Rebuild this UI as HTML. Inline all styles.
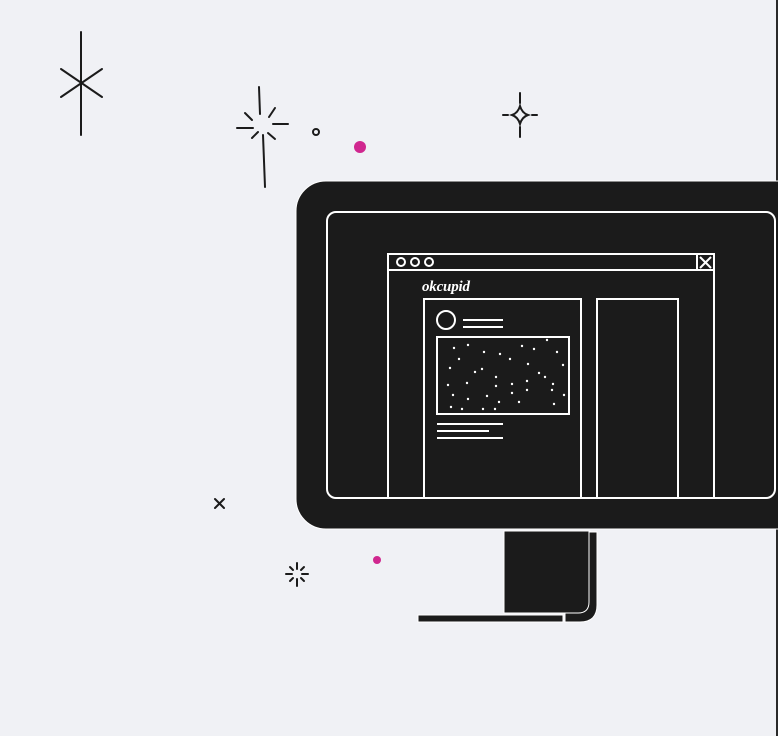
<!DOCTYPE html>
<html><head><style>
html,body{margin:0;padding:0;background:#f0f1f5;}
svg{display:block}
</style></head><body>
<svg width="778" height="736" viewBox="0 0 778 736" xmlns="http://www.w3.org/2000/svg">
<rect width="778" height="736" fill="#f0f1f5"/>
<rect x="776" y="0" width="2" height="736" fill="#2a2a2a"/>
<g stroke="#1b1b1b" stroke-width="2" stroke-linecap="round" fill="none">
<line x1="81" y1="32" x2="81" y2="135"/>
<line x1="61" y1="69" x2="102" y2="97"/>
<line x1="61" y1="97" x2="102" y2="69"/>
<line x1="259" y1="87" x2="260" y2="114"/>
<line x1="263" y1="135" x2="265" y2="187"/>
<line x1="237" y1="128" x2="253" y2="128"/>
<line x1="273" y1="124" x2="288" y2="124"/>
<line x1="245" y1="113" x2="252" y2="120"/>
<line x1="275" y1="108" x2="269" y2="117"/>
<line x1="252" y1="138" x2="258" y2="132"/>
<line x1="268" y1="133" x2="275" y2="139"/>
<circle cx="316" cy="132" r="3"/>
<line x1="520" y1="93" x2="520" y2="103"/>
<line x1="520" y1="127" x2="520" y2="137"/>
<line x1="503" y1="115" x2="508" y2="115"/>
<line x1="532" y1="115" x2="537" y2="115"/>
<path d="M520 106 Q522 113 528 115 Q522 117 520 124 Q518 117 512 115 Q518 113 520 106Z"/>
<line x1="215" y1="499" x2="224" y2="508"/>
<line x1="224" y1="499" x2="215" y2="508"/>
<line x1="297" y1="563" x2="297" y2="569"/>
<line x1="297" y1="579" x2="297" y2="586"/>
<line x1="286" y1="574" x2="292" y2="574"/>
<line x1="302" y1="574" x2="308" y2="574"/>
<line x1="290" y1="567" x2="293" y2="570"/>
<line x1="304" y1="567" x2="301" y2="570"/>
<line x1="290" y1="581" x2="293" y2="578"/>
<line x1="304" y1="581" x2="301" y2="578"/>
</g>
<circle cx="360" cy="147" r="6" fill="#d0278f"/>
<circle cx="377" cy="560" r="4" fill="#d0278f"/>
<rect x="504" y="531" width="86" height="82" fill="#1b1b1b" stroke="#fff" stroke-width="1"/>
<path d="M589 532 V602 Q589 613 578 613 H565 V622 H580 Q597 622 597 605 V532 Z" fill="#1b1b1b" stroke="#fff" stroke-width="1"/>
<rect x="418" y="615" width="145" height="7" fill="#1b1b1b" stroke="#fff" stroke-width="1"/>
<rect x="296" y="181" width="520" height="348" rx="30" fill="#1b1b1b" stroke="#fff" stroke-width="1"/>
<g stroke="#fff" stroke-width="2" fill="none">
<path d="M388 498 V254 H714 V498"/>
<line x1="388" y1="270" x2="714" y2="270"/>
<line x1="697" y1="254" x2="697" y2="270"/>
<line x1="700" y1="257" x2="711" y2="268"/>
<line x1="711" y1="257" x2="700" y2="268"/>
<circle cx="401" cy="262" r="4"/>
<circle cx="415" cy="262" r="4"/>
<circle cx="429" cy="262" r="4"/>
<path d="M424 498 V299 H581 V498"/>
<path d="M597 498 V299 H678 V498"/>
<circle cx="446" cy="320" r="9"/>
<line x1="463" y1="320" x2="503" y2="320"/>
<line x1="463" y1="327" x2="503" y2="327"/>
<rect x="437" y="337" width="132" height="77"/>
<line x1="437" y1="424" x2="503" y2="424"/>
<line x1="437" y1="431" x2="489" y2="431"/>
<line x1="437" y1="438" x2="503" y2="438"/>
</g>
<rect x="327" y="212" width="448" height="286" rx="9" fill="none" stroke="#fff" stroke-width="2"/>
<g fill="#fff">
<circle cx="454" cy="348" r="1.2"/><circle cx="468" cy="345" r="1.2"/><circle cx="484" cy="352" r="1.2"/><circle cx="500" cy="354" r="1.2"/><circle cx="522" cy="346" r="1.2"/><circle cx="534" cy="349" r="1.2"/><circle cx="557" cy="352" r="1.2"/><circle cx="459" cy="359" r="1.2"/><circle cx="510" cy="359" r="1.2"/><circle cx="528" cy="364" r="1.2"/><circle cx="563" cy="365" r="1.2"/><circle cx="450" cy="368" r="1.2"/><circle cx="475" cy="372" r="1.2"/><circle cx="482" cy="369" r="1.2"/><circle cx="539" cy="373" r="1.2"/><circle cx="545" cy="377" r="1.2"/><circle cx="496" cy="377" r="1.2"/><circle cx="448" cy="385" r="1.2"/><circle cx="467" cy="383" r="1.2"/><circle cx="496" cy="386" r="1.2"/><circle cx="512" cy="384" r="1.2"/><circle cx="527" cy="381" r="1.2"/><circle cx="553" cy="384" r="1.2"/><circle cx="527" cy="390" r="1.2"/><circle cx="552" cy="390" r="1.2"/><circle cx="453" cy="395" r="1.2"/><circle cx="487" cy="396" r="1.2"/><circle cx="512" cy="393" r="1.2"/><circle cx="564" cy="395" r="1.2"/><circle cx="468" cy="399" r="1.2"/><circle cx="499" cy="402" r="1.2"/><circle cx="519" cy="402" r="1.2"/><circle cx="554" cy="404" r="1.2"/><circle cx="451" cy="407" r="1.2"/><circle cx="462" cy="409" r="1.2"/><circle cx="483" cy="409" r="1.2"/><circle cx="495" cy="409" r="1.2"/><circle cx="547" cy="340" r="1.2"/>
</g>
<text x="422" y="291" fill="#fff" font-family="Liberation Serif, serif" font-weight="bold" font-style="italic" font-size="15" letter-spacing="-0.2">okcupid</text>
</svg>
</body></html>
